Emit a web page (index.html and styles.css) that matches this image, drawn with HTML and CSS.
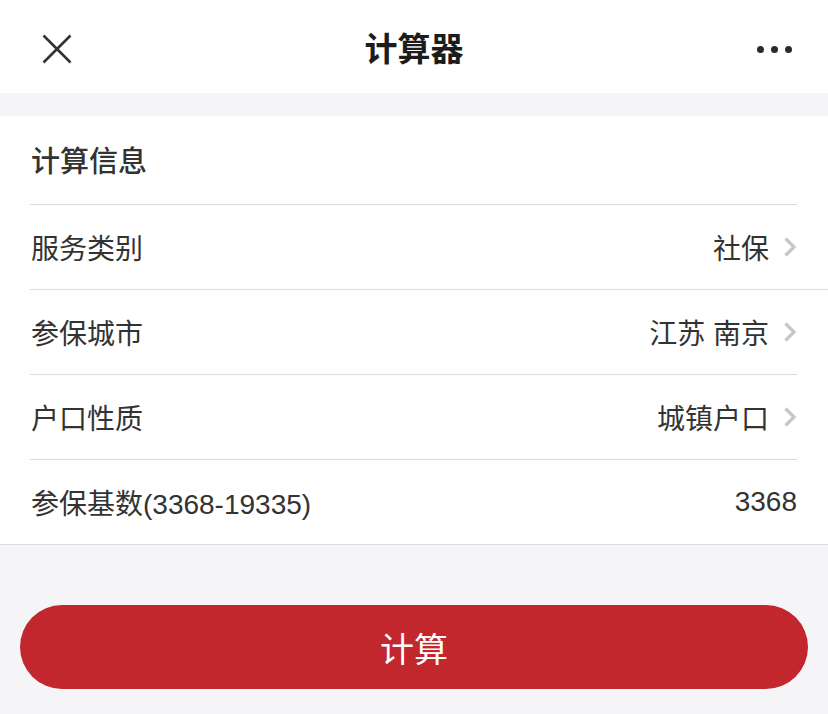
FILE: index.html
```html
<!DOCTYPE html>
<html lang="zh-CN">
<head>
<meta charset="utf-8">
<title>计算器</title>
<link rel="stylesheet" href="styles.css">
</head>
<body>
<header class="nav">
  <span class="nav-close">
    <svg width="30" height="30" viewBox="0 0 30 30"><path d="M1.5 1.5 L28.5 28.5 M28.5 1.5 L1.5 28.5" stroke="#333" stroke-width="2.6" fill="none" stroke-linecap="butt"/></svg>
  </span>
  <h1 class="nav-title">计算器</h1>
  <span class="nav-more"><i></i><i></i><i></i></span>
</header>
<main class="card">
  <div class="card-title">计算信息</div>
  <div class="row">
    <span class="label">服务类别</span>
    <span class="value">社保<svg class="chev" width="14" height="22" viewBox="0 0 14 22"><path d="M2.5 2.5 L11 11 L2.5 19.5" stroke="#c7c7cb" stroke-width="3.2" fill="none"/></svg></span>
  </div>
  <div class="row wide">
    <span class="label">参保城市</span>
    <span class="value">江苏 南京<svg class="chev" width="14" height="22" viewBox="0 0 14 22"><path d="M2.5 2.5 L11 11 L2.5 19.5" stroke="#c7c7cb" stroke-width="3.2" fill="none"/></svg></span>
  </div>
  <div class="row">
    <span class="label">户口性质</span>
    <span class="value">城镇户口<svg class="chev" width="14" height="22" viewBox="0 0 14 22"><path d="M2.5 2.5 L11 11 L2.5 19.5" stroke="#c7c7cb" stroke-width="3.2" fill="none"/></svg></span>
  </div>
  <div class="row">
    <span class="label">参保基数(3368-19335)</span>
    <span class="value">3368</span>
  </div>
</main>
<div class="actions">
  <button class="btn">计算</button>
</div>
</body>
</html>
```
FILE: styles.css
```css
* { box-sizing: border-box; }
html, body {
  margin: 0;
  padding: 0;
  background: #f5f5f7;
  font-family: "Liberation Sans", "Noto Sans CJK SC", sans-serif;
  color: #333;
}
body { width: 828px; height: 714px; overflow: hidden; }

.nav {
  height: 93px;
  background: #fff;
  display: flex;
  align-items: center;
  justify-content: space-between;
  padding: 0 36px 0 42px;
  position: relative;
}
.nav-close { display: flex; width: 30px; height: 30px; margin-top: 4px; }
.nav-title {
  position: absolute;
  left: 0; right: 0;
  text-align: center;
  margin: 0;
  font-family: "Noto Sans CJK SC", sans-serif;
  font-size: 33px;
  font-weight: 700;
  color: #1c1c1c;
  line-height: 93px;
  top: 1px;
  pointer-events: none;
}
.nav-more { display: flex; gap: 7px; margin-top: 5px; }
.nav-more i {
  display: block;
  width: 7px; height: 7px;
  border-radius: 50%;
  background: #2a2a2a;
}

.card {
  margin-top: 23px;
  background: #fff;
  padding-left: 30px;
  border-bottom: 1px solid #dcdcdc;
}
.card-title {
  height: 88px;
  display: flex;
  align-items: center;
  font-family: "Noto Sans CJK SC", sans-serif;
  font-size: 29px;
  font-weight: 500;
  color: #333;
  padding-left: 1px;
  padding-bottom: 2px;
}
.row {
  height: 85px;
  margin-right: 31px;
  border-top: 1px solid #dcdcdc;
  display: flex;
  align-items: center;
  justify-content: space-between;
  font-size: 28px;
  color: #333;
}
.row.wide { margin-right: 0; padding-right: 31px; }
.label { padding-left: 1px; }
.value { display: flex; align-items: center; }
.chev { margin-left: 14px; }

.actions { padding: 60px 20px 0; }
.btn {
  display: block;
  width: 100%;
  height: 84px;
  border: none;
  border-radius: 42px;
  background: #c1272d;
  color: #fff;
  font-family: "Noto Sans CJK SC", sans-serif;
  font-size: 34px;
  font-weight: 400;
  padding: 0;
}
```
